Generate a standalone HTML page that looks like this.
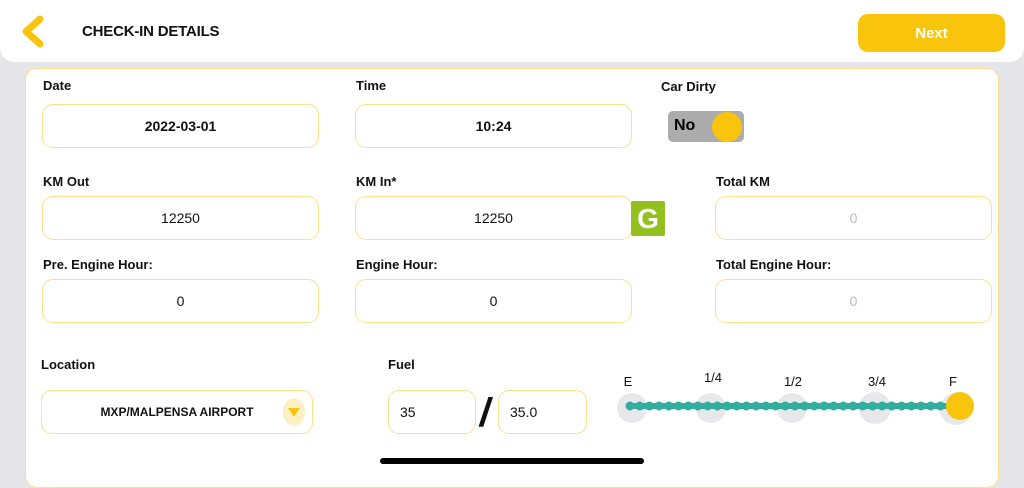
<!DOCTYPE html>
<html><head><style>
*{margin:0;padding:0;box-sizing:border-box}
body{width:1024px;height:473px;background:#e6e5ea;font-family:"Liberation Sans",Arial,sans-serif;position:relative;overflow:hidden;color:#111}
.hdr{position:absolute;left:0;top:0;width:1024px;height:62px;background:#fff;border-radius:0 0 14px 14px}
.title{position:absolute;left:82px;top:23px;font-size:15px;font-weight:bold;letter-spacing:-0.2px}
.next{position:absolute;left:858px;top:14px;width:147px;height:38px;background:#f9c40c;border-radius:10px;color:#fff;font-weight:bold;font-size:15px;text-align:center;line-height:40px}
.card{position:absolute;left:25px;top:68px;width:974px;height:420px;background:#fff;border:1px solid #fde08a;border-radius:12px}
.lbl{position:absolute;font-size:13px;font-weight:bold}
.box{position:absolute;height:44px;border:1px solid #fde08a;border-radius:11px;text-align:center;line-height:42px;font-size:14px}
.g{color:#bbb}
</style></head><body>
<div class="hdr">
<svg style="position:absolute;left:18px;top:15px" width="28" height="34" viewBox="0 0 28 34"><path d="M22 4 L8 16.5 L22 29" fill="none" stroke="#f9c40c" stroke-width="7" stroke-linecap="round" stroke-linejoin="round"/></svg>
<div class="title">CHECK-IN DETAILS</div>
<div class="next">Next</div>
</div>
<div class="card"></div>
<div class="lbl" style="left:43px;top:78px">Date</div>
<div class="lbl" style="left:356px;top:78px">Time</div>
<div class="lbl" style="left:661px;top:79px">Car Dirty</div>
<div class="box" style="left:42px;top:104px;width:277px;font-weight:bold">2022-03-01</div>
<div class="box" style="left:355px;top:104px;width:277px;font-weight:bold">10:24</div>
<div style="position:absolute;left:668px;top:111px;width:76px;height:31px;background:#acacac;border-radius:5px"><span style="position:absolute;left:6px;top:6px;font-weight:bold;font-size:16px;color:#000">No</span><div style="position:absolute;left:44px;top:1px;width:30px;height:30px;border-radius:50%;background:#f9c40c"></div></div>
<div class="lbl" style="left:43px;top:174px">KM Out</div>
<div class="lbl" style="left:356px;top:174px">KM In*</div>
<div class="lbl" style="left:716px;top:174px">Total KM</div>
<div class="box" style="left:42px;top:196px;width:277px">12250</div>
<div class="box" style="left:355px;top:196px;width:277px">12250</div>
<div style="position:absolute;left:631px;top:201px;width:34px;height:35px;background:#93c01f;border-radius:2px;color:#fff;font-weight:bold;font-size:28px;text-align:center;line-height:35px">G</div>
<div class="box g" style="left:715px;top:196px;width:277px">0</div>
<div class="lbl" style="left:43px;top:257px">Pre. Engine Hour:</div>
<div class="lbl" style="left:356px;top:257px">Engine Hour:</div>
<div class="lbl" style="left:716px;top:257px">Total Engine Hour:</div>
<div class="box" style="left:42px;top:279px;width:277px">0</div>
<div class="box" style="left:355px;top:279px;width:277px">0</div>
<div class="box g" style="left:715px;top:279px;width:277px">0</div>
<div class="lbl" style="left:41px;top:357px">Location</div>
<div class="lbl" style="left:388px;top:357px">Fuel</div>
<div class="box" style="left:41px;top:390px;width:272px;font-size:12px;font-weight:bold">MXP/MALPENSA AIRPORT
<div style="position:absolute;left:241px;top:7px;width:22px;height:28px;border-radius:50%;background:#fdf0c4"></div>
<div style="position:absolute;left:246px;top:17px;width:0;height:0;border-left:6px solid transparent;border-right:6px solid transparent;border-top:9px solid #f9c40c"></div></div>
<div class="box" style="left:388px;top:390px;width:88px;text-align:left;padding-left:11px">35</div>
<div style="position:absolute;left:480px;top:391px;font-size:40px;font-weight:bold;transform:skewX(-8deg)">/</div>
<div class="box" style="left:498px;top:390px;width:89px;text-align:left;padding-left:11px">35.0</div>
<svg style="position:absolute;left:600px;top:360px" width="424" height="80">
<g fill="#e8e8ea"><circle cx="32" cy="48" r="15"/><circle cx="111" cy="48" r="15"/><circle cx="192" cy="48" r="15"/><circle cx="275" cy="48" r="16"/><circle cx="356" cy="49" r="16"/></g>
<line x1="30" y1="46" x2="350" y2="46" stroke="#31ae9f" stroke-width="6" stroke-linecap="round"/>
<line x1="30" y1="46" x2="350" y2="46" stroke="#31ae9f" stroke-width="9" stroke-linecap="round" stroke-dasharray="0 9.7"/>
<circle cx="360" cy="46" r="14" fill="#f9c40c"/>
<g font-family="Liberation Sans" font-size="13" fill="#111" text-anchor="middle"><text x="28" y="26">E</text><text x="113" y="22">1/4</text><text x="193" y="26">1/2</text><text x="277" y="26">3/4</text><text x="353" y="26">F</text></g>
</svg>
<div style="position:absolute;left:380px;top:458px;width:264px;height:6px;border-radius:3px;background:#000"></div>
</body></html>
